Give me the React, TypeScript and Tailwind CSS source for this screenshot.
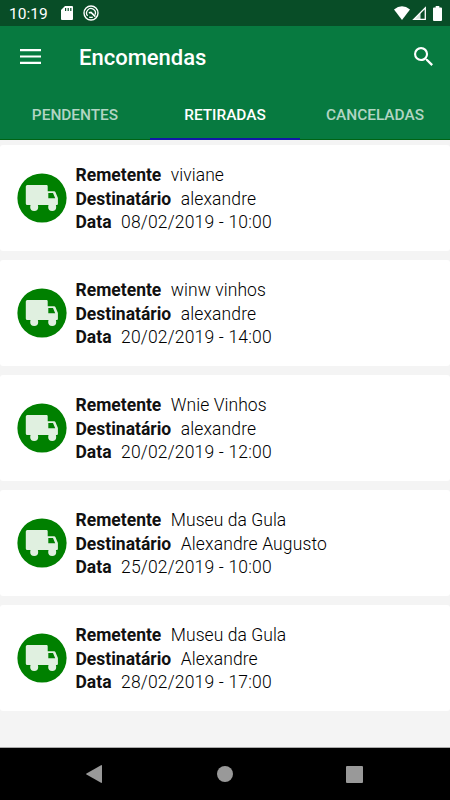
const tabs = ["PENDENTES", "RETIRADAS", "CANCELADAS"];

const orders = [
  { from: "viviane", to: "alexandre", date: "08/02/2019 - 10:00" },
  { from: "winw vinhos", to: "alexandre", date: "20/02/2019 - 14:00" },
  { from: "Wnie Vinhos", to: "alexandre", date: "20/02/2019 - 12:00" },
  { from: "Museu da Gula", to: "Alexandre Augusto", date: "25/02/2019 - 10:00" },
  { from: "Museu da Gula", to: "Alexandre", date: "28/02/2019 - 17:00" },
];

function StatusBar() {
  return (
    <div className="flex h-[26px] items-center bg-[#084d27] pl-[9px] pr-2 text-white">
      <span className="w-[52px] pt-[2px] text-[15.5px] leading-[24px]">10:19</span>
      <svg className="h-[14px] w-3" viewBox="0 0 12 14" fill="currentColor">
        <path
          fillRule="evenodd"
          d="M4 0h7q1 0 1 1v12q0 1-1 1H1q-1 0-1-1V4zM4 2v3h1.2V2zM6.6 2v3h1.2V2zM9.2 2v3h1.2V2z"
        />
      </svg>
      <svg className="ml-[10px] h-4 w-4" viewBox="0 0 16 16" fill="none" stroke="currentColor">
        <circle cx="8" cy="8" r="7" strokeWidth="1.4" />
        <path d="M4.6 10.8A4.4 4.4 0 1 1 12 9.8M6.2 12q1.8.9 3.6 0" strokeWidth="1.3" />
        <path d="M5.8 7.8L8 7.4l4.4 4.2" strokeWidth="1.6" />
      </svg>
      <div className="ml-auto flex items-center">
        <svg className="h-[14px] w-4" viewBox="0 0 16 14" fill="currentColor">
          <path d="M8 14L0 3.6Q8-3 16 3.6z" />
        </svg>
        <svg className="ml-[2px] h-[14px] w-[14px]" viewBox="0 0 14 14">
          <path d="M1.8 13.3H13.3V1.8z" fill="none" stroke="currentColor" strokeWidth="1.3" />
          <path d="M8.5 6.5L1.8 13.3H8.5z" fill="currentColor" fillOpacity="0.85" />
        </svg>
        <svg className="ml-[7px] h-[15px] w-[9px]" viewBox="0 0 9 15" fill="currentColor">
          <path d="M2.7 0h3.6v1.5H8q1 0 1 1V14q0 1-1 1H1q-1 0-1-1V2.5q0-1 1-1h1.7z" />
        </svg>
      </div>
    </div>
  );
}

function Header() {
  return (
    <header className="flex h-[114px] flex-col bg-[#077a40] text-white">
      <div className="flex h-[62px] items-center pl-5 pr-[17px]">
        <svg className="mb-px h-[15px] w-[21px]" viewBox="0 0 21 15" fill="currentColor">
          <path d="M0 0h21v2.2H0zM0 6.4h21v2.2H0zM0 12.8h21V15H0z" />
        </svg>
        <h1 className="ml-[38px] pt-px text-[22px] font-medium">Encomendas</h1>
        <svg className="mb-[2px] ml-auto h-[19px] w-[19px]" viewBox="3 3 17.5 17.5" fill="currentColor">
          <path d="M15.5 14h-.79l-.28-.27A6.471 6.471 0 0 0 16 9.5 6.5 6.5 0 1 0 9.5 16c1.61 0 3.09-.59 4.23-1.57l.27.28v.79l5 4.99L20.49 19l-4.99-5zm-6 0C7.01 14 5 11.99 5 9.5S7.01 5 9.5 5 14 7.01 14 9.5 11.99 14 9.5 14z" />
        </svg>
      </div>
      <nav className="grid flex-1 grid-cols-3 text-center text-[15.4px] font-medium">
        {tabs.map((tab) => (
          <button
            key={tab}
            className={
              tab === "RETIRADAS"
                ? "border-b-2 border-[#1118a8] pt-[5px] text-white"
                : "border-b border-[#006414] pt-[4px] text-white/70"
            }
          >
            {tab}
          </button>
        ))}
      </nav>
    </header>
  );
}

function TruckBadge() {
  return (
    <svg className="h-[50px] w-[50px] shrink-0" viewBox="0 0 50 50">
      <circle cx="25" cy="25" r="24.6" fill="#008000" />
      <g fill="#e0f0e0">
        <path
          fillRule="evenodd"
          d="M10.3 12H29.5q1.2 0 1.2 1.2V18.3H37.2q.8 0 1.2.8L40.9 25V31q0 1-1 1H10.3q-1.5 0-1.5-1.5V13.5q0-1.5 1.5-1.5zM31.3 20V25.3H38.2L36 20z"
        />
        <circle cx="17.2" cy="34" r="4" />
        <circle cx="35.2" cy="34" r="4" />
      </g>
    </svg>
  );
}

function Row({ label, value, spacing }: { label: string; value: string; spacing: string }) {
  return (
    <p className="flex gap-[9.5px]">
      <b className="font-bold text-[#111]">{label}</b>
      <span className={`font-light text-black ${spacing}`}>{value}</span>
    </p>
  );
}

export default function App() {
  return (
    <div className="flex h-[800px] w-[450px] flex-col overflow-hidden bg-[#f4f4f4] font-['Roboto',sans-serif]">
      <StatusBar />
      <Header />

      <main className="flex flex-1 flex-col gap-[9px] pt-[4.5px]">
        {orders.map((order) => (
          <article key={order.date} className="flex h-[106px] items-center rounded-[3px] bg-white pl-[17px]">
            <TruckBadge />
            <div className="ml-[8.5px] pt-[4.2px] text-[17.5px] leading-[23.75px]">
              <Row label="Remetente" value={order.from} spacing="tracking-[0.05px]" />
              <Row label="Destinatário" value={order.to} spacing="tracking-[0.12px]" />
              <Row label="Data" value={order.date} spacing="tracking-[0.18px]" />
            </div>
          </article>
        ))}
      </main>

      {/* Android navigation */}
      <div className="flex h-[53px] items-center justify-between border-t border-[#aaa] bg-black pl-[86px] pr-[87px] text-[#999]">
        <svg className="h-[18px] w-4" viewBox="0 0 16 18" fill="currentColor">
          <path d="M15 .2q1-.4 1 .8v16q0 1.2-1 .8L.5 9.6Q-.3 9 .5 8.4z" />
        </svg>
        <div className="ml-px h-4 w-4 rounded-full bg-[#999]" />
        <div className="h-[17px] w-[17px] rounded-[1px] bg-[#999]" />
      </div>
    </div>
  );
}
